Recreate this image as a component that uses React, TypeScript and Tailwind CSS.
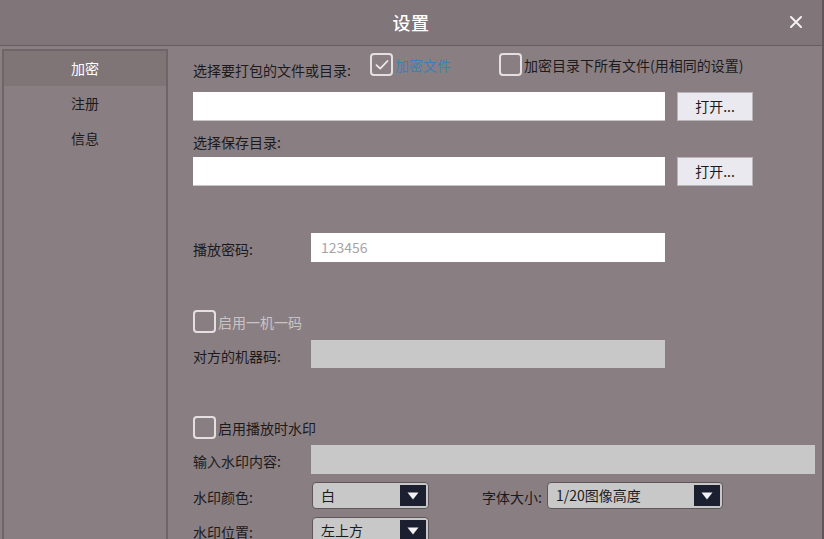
import React from 'react';

const font = { fontFamily: '"Noto Sans CJK SC", "Noto Sans", sans-serif' };

const Check = ({ checked, label, tone = 'dark' }: { checked?: boolean; label: string; tone?: 'dark' | 'blue' | 'muted' }) => {
    const color = tone === 'blue' ? 'text-[#3f7fb3]' : tone === 'muted' ? 'text-[#c9c3c5]' : 'text-[#1d1a1b]';
    return (
        <div className="flex items-start">
            <div className="w-[23px] h-[23px] rounded-[4px] border-2 border-[#e4e0e1] flex items-center justify-center shrink-0">
                {checked && (
                    <svg width="14" height="12" viewBox="0 0 14 12" fill="none">
                        <path d="M1.5 6.2 L5.2 9.6 L12.5 2" stroke="#eeeaea" strokeWidth="1.8" strokeLinecap="round" strokeLinejoin="round" />
                    </svg>
                )}
            </div>
            <span className={`ml-[2px] mt-[3px] text-[14px] leading-[18px] ${color}`}>{label}</span>
        </div>
    );
};

const Select = ({ value, width }: { value: string; width: string }) => (
    <div className={`${width} h-[27px] rounded-[4px] border border-[#5e5658] bg-[#c8c8c8] flex items-center justify-between pl-[8px] pr-[2px]`}>
        <span className="text-[14px] text-[#1d1a1b]">{value}</span>
        <div className="w-[26px] h-[21px] bg-[#1c1f30] flex items-center justify-center">
            <svg width="12" height="8" viewBox="0 0 12 8">
                <path d="M0.5 0.5 H11.5 L6 7.5 Z" fill="#f2f2f2" />
            </svg>
        </div>
    </div>
);

const OpenButton = () => (
    <button className="w-[76px] h-[29px] bg-[#e9e9ef] border border-[#b9b4b6] text-[14px] text-[#1d1a1b] flex items-center justify-center">
        打开...
    </button>
);

export default function App() {
    const nav = ['加密', '注册', '信息'];

    return (
        <div className="w-[824px] h-[539px] overflow-hidden bg-[#897f83] flex flex-col border-r-2 border-[#5f5759]" style={font}>
            <div className="h-[46px] shrink-0 bg-[#807578] border-b border-[#655d5f] flex items-center justify-center relative">
                <span className="text-[18px] text-white font-medium tracking-wide">设置</span>
                <svg className="absolute right-[20px] top-[16px]" width="12" height="12" viewBox="0 0 12 12">
                    <path d="M1 1 L11 11 M11 1 L1 11" stroke="#f4f0f1" strokeWidth="2" strokeLinecap="round" />
                </svg>
            </div>

            <div className="flex flex-1 min-h-0">
                <aside className="ml-[2px] mt-[3px] w-[166px] shrink-0 border-2 border-b-0 border-[#6d6567] bg-[#897f83]">
                    {nav.map((item, i) => (
                        <div
                            key={item}
                            className={`h-[35px] flex items-center justify-center text-[14px] ${i === 0 ? 'bg-[#7f7577] text-white' : 'text-[#1d1a1b]'}`}
                        >
                            {item}
                        </div>
                    ))}
                </aside>

                <main className="pl-[25px] flex flex-col text-[14px] text-[#1d1a1b]">
                    {/* file / dir selection */}
                    <div className="mt-[7px] flex items-start">
                        <span className="mt-[8px] leading-[18px] w-[177px]">选择要打包的文件或目录:</span>
                        <Check checked label="加密文件" tone="blue" />
                        <div className="ml-[48px]">
                            <Check label="加密目录下所有文件(用相同的设置)" />
                        </div>
                    </div>
                    <div className="mt-[13px] flex gap-[12px]">
                        <div className="w-[472px] h-[29px] bg-white border-b border-[#c9c5c7]" />
                        <OpenButton />
                    </div>

                    <span className="mt-[12px] leading-[18px]">选择保存目录:</span>
                    <div className="mt-[6px] flex gap-[12px]">
                        <div className="w-[472px] h-[29px] bg-white border-b border-[#c9c5c7]" />
                        <OpenButton />
                    </div>

                    {/* password */}
                    <div className="mt-[47px] flex items-center">
                        <span className="w-[118px] pt-[4px]">播放密码:</span>
                        <div className="w-[354px] h-[29px] bg-white flex items-center pl-[10px] text-[#a8a4a6]">123456</div>
                    </div>

                    {/* machine code */}
                    <div className="mt-[48px]">
                        <Check label="启用一机一码" tone="muted" />
                    </div>
                    <div className="mt-[7px] flex items-center">
                        <span className="w-[118px] pt-[4px]">对方的机器码:</span>
                        <div className="w-[354px] h-[28px] bg-[#c8c8c8]" />
                    </div>

                    {/* watermark */}
                    <div className="mt-[48px]">
                        <Check label="启用播放时水印" />
                    </div>
                    <div className="mt-[6px] flex items-center">
                        <span className="w-[118px] pt-[4px]">输入水印内容:</span>
                        <div className="w-[504px] h-[29px] bg-[#c8c8c8]" />
                    </div>
                    <div className="mt-[8px] flex items-center">
                        <span className="w-[119px] pt-[4px]">水印颜色:</span>
                        <Select value="白" width="w-[117px]" />
                        <span className="ml-[53px] w-[65px] pt-[4px]">字体大小:</span>
                        <Select value="1/20图像高度" width="w-[176px]" />
                    </div>
                    <div className="mt-[8px] flex items-center">
                        <span className="w-[119px] pt-[4px]">水印位置:</span>
                        <Select value="左上方" width="w-[117px]" />
                    </div>
                </main>
            </div>
        </div>
    );
}
